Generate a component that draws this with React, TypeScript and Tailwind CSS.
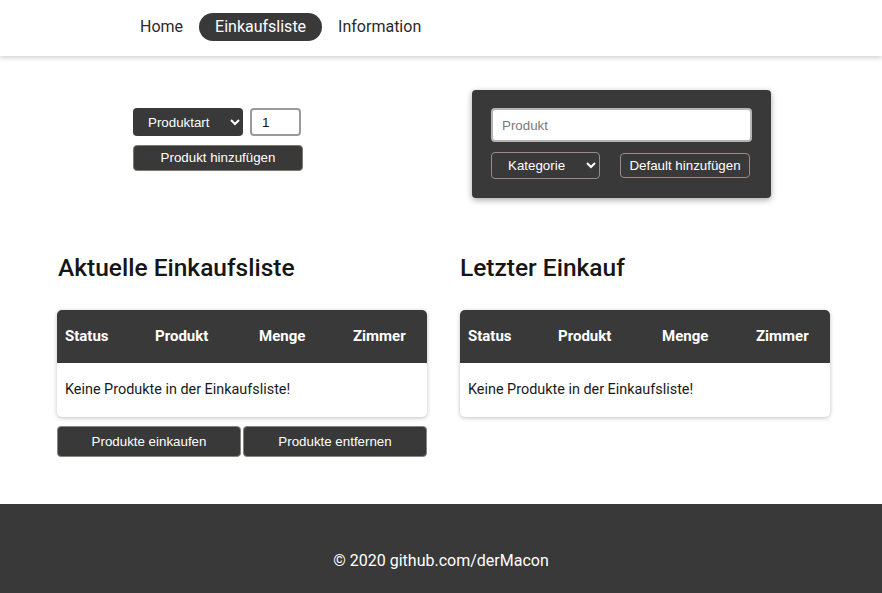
import React from "react"

const dark = "bg-[#393939]"

function DataTable() {
  return (
    <div className="w-[370px] overflow-hidden rounded-[5px] bg-white shadow-[0_1px_4px_rgba(0,0,0,0.25)]">
      <div className={`grid h-[53px] grid-cols-[90px_104px_94px_1fr] items-center pl-2 text-[15px] font-bold text-white ${dark}`}>
        <span>Status</span>
        <span>Produkt</span>
        <span>Menge</span>
        <span>Zimmer</span>
      </div>
      <div className="flex h-[54px] items-center pl-2 text-[14.4px] text-[#1a1a1a]">
        Keine Produkte in der Einkaufsliste!
      </div>
    </div>
  )
}

export default function App() {
  return (
    <div className="min-h-screen bg-white font-['Roboto',sans-serif]">
      <header className="relative z-10 flex h-14 items-center bg-white pb-[2px] pl-[124px] shadow-[0_2px_5px_rgba(0,0,0,0.18)]">
        <nav className="flex items-center text-base text-[#2a2a2a]">
          <a className="px-4 leading-7">Home</a>
          <a className={`rounded-full px-4 leading-7 text-white ${dark}`}>Einkaufsliste</a>
          <a className="px-4 leading-7">Information</a>
        </nav>
      </header>

      <main className="pt-[34px]">
        <section className="flex items-start">
          <div className="ml-[133px] mt-[18px] flex w-[170px] flex-col gap-[9px] font-['Liberation_Sans',Arial,sans-serif] text-[13.33px]">
            <div className="flex gap-[7px]">
              <select className={`h-7 w-[110px] rounded-[4px] pl-[11px] text-white ${dark}`} defaultValue="">
                <option value="">Produktart</option>
              </select>
              <input
                type="number"
                defaultValue={1}
                className="h-7 w-[51px] rounded-[4px] border-2 border-[#9a9a9a] pl-[10px] text-[#111]"
              />
            </div>
            <button className={`h-[26px] w-[170px] rounded-[4px] border border-[#7d7873] text-white ${dark}`}>
              Produkt hinzufügen
            </button>
          </div>

          <div className={`ml-[169px] h-[108px] w-[299px] rounded-[4px] px-[19px] pt-[18px] shadow-[0_2px_6px_rgba(0,0,0,0.35)] ${dark} font-['Liberation_Sans',Arial,sans-serif] text-[13.33px]`}>
            <input
              placeholder="Produkt"
              className="h-[34px] w-[261px] rounded-[4px] border-2 border-[#b5b5b5] bg-white pl-[9px] text-[#111] placeholder:text-[#7a7a7a]"
            />
            <div className="mt-[10px] flex items-start justify-between pr-[2px]">
              <select className="h-[27px] w-[109px] rounded-[4px] border border-[#9a8c84] bg-transparent pl-[12px] text-white" defaultValue="">
                <option value="" className="text-black">Kategorie</option>
              </select>
              <button className="mt-px h-[25px] w-[130px] rounded-[4px] border border-[#9a8c84] text-white">
                Default hinzufügen
              </button>
            </div>
          </div>
        </section>

        <section className="mt-[56px] flex items-start pl-[57px]">
          <div className="flex w-[370px] flex-col">
            <h2 className="ml-px text-[24.5px] font-medium leading-7 text-[#161616]">Aktuelle Einkaufsliste</h2>
            <div className="mt-7">
              <DataTable />
            </div>
            <div className="mt-[9px] flex gap-[2px] font-['Liberation_Sans',Arial,sans-serif] text-[13.33px] text-white">
              <button className={`h-[31px] w-[184px] rounded-[4px] border border-[#8a847e] ${dark}`}>Produkte einkaufen</button>
              <button className={`h-[31px] w-[184px] rounded-[4px] border border-[#8a847e] ${dark}`}>Produkte entfernen</button>
            </div>
          </div>
          <div className="ml-[33px] flex w-[370px] flex-col">
            <h2 className="text-[24.5px] font-medium leading-7 text-[#161616]">Letzter Einkauf</h2>
            <div className="mt-7">
              <DataTable />
            </div>
          </div>
        </section>
      </main>

      <footer className={`mt-[47px] h-[89px] pt-[46px] text-center text-base leading-[22px] text-white ${dark}`}>
        © 2020 github.com/derMacon
      </footer>
    </div>
  )
}
